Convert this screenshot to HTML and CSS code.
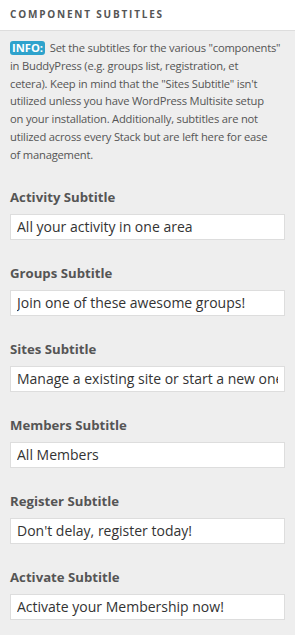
FILE: index.html
```html
<!DOCTYPE html>
<html lang="en">
<head>
    <meta charset="UTF-8">
    <meta name="viewport" content="width=device-width, initial-scale=1.0">
    <title>Component Subtitles</title>
    <link rel="stylesheet" href="styles.css">
</head>
<body>
    <div class="panel">
        <h3 class="panel-title">Component Subtitles</h3>

        <div class="panel-body">
            <!-- line breaks kept as in the original panel -->
            <p class="info">
                <span class="badge">INFO:</span> Set the subtitles for the various "components"<br>
                in BuddyPress (e.g. groups list, registration, et<br>
                cetera). Keep in mind that the "Sites Subtitle" isn't<br>
                utilized unless you have WordPress Multisite setup<br>
                on your installation. Additionally, subtitles are not<br>
                utilized across every Stack but are left here for ease<br>
                of management.
            </p>

            <div class="field">
                <label for="activity">Activity Subtitle</label>
                <input type="text" id="activity" value="All your activity in one area">
            </div>

            <div class="field">
                <label for="groups">Groups Subtitle</label>
                <input type="text" id="groups" value="Join one of these awesome groups!">
            </div>

            <div class="field">
                <label for="sites">Sites Subtitle</label>
                <input type="text" id="sites" value="Manage a existing site or start a new one">
            </div>

            <div class="field">
                <label for="members">Members Subtitle</label>
                <input type="text" id="members" value="All Members">
            </div>

            <div class="field">
                <label for="register">Register Subtitle</label>
                <input type="text" id="register" value="Don't delay, register today!">
            </div>

            <div class="field">
                <label for="activate">Activate Subtitle</label>
                <input type="text" id="activate" value="Activate your Membership now!">
            </div>
        </div>
    </div>
</body>
</html>
```

FILE: styles.css
```css
body {
    margin: 0;
    font-family: "Open Sans", sans-serif;
    background-color: #eeeeee;
    color: #555;
}
.panel-title {
    margin: 0;
    height: 30px;
    line-height: 29px;
    padding: 0 10px;
    background: white;
    border-bottom: 1px solid #dddddd;
    font-size: 10px;
    font-weight: bold;
    letter-spacing: 1.8px;
    text-transform: uppercase;
    color: #555;
}
.panel-body {
    padding: 8px 10px 20px;
}
.info {
    margin: 0;
    font-size: 11.2px;
    letter-spacing: -0.2px;
    line-height: 17.8px;
    white-space: nowrap;
    color: #555;
}
.badge {
    display: inline-block;
    background-color: #2ea2cc;
    color: white;
    font-weight: bold;
    letter-spacing: 0;
    line-height: 14px;
    padding: 0 2px;
    margin-right: 2px;
    border-radius: 3px;
}
.field {
    margin-top: 23px;
}
.field label {
    display: block;
    font-size: 13.2px;
    font-weight: bold;
    line-height: 20px;
    margin-bottom: 7px;
    color: #555;
}
.field input {
    display: block;
    box-sizing: border-box;
    width: 100%;
    height: 26px;
    margin: 0;
    padding: 0 6px;
    border: 1px solid #dddddd;
    background: white;
    font-family: "Open Sans", sans-serif;
    font-size: 14px;
    color: #333;
    outline: none;
}
```
